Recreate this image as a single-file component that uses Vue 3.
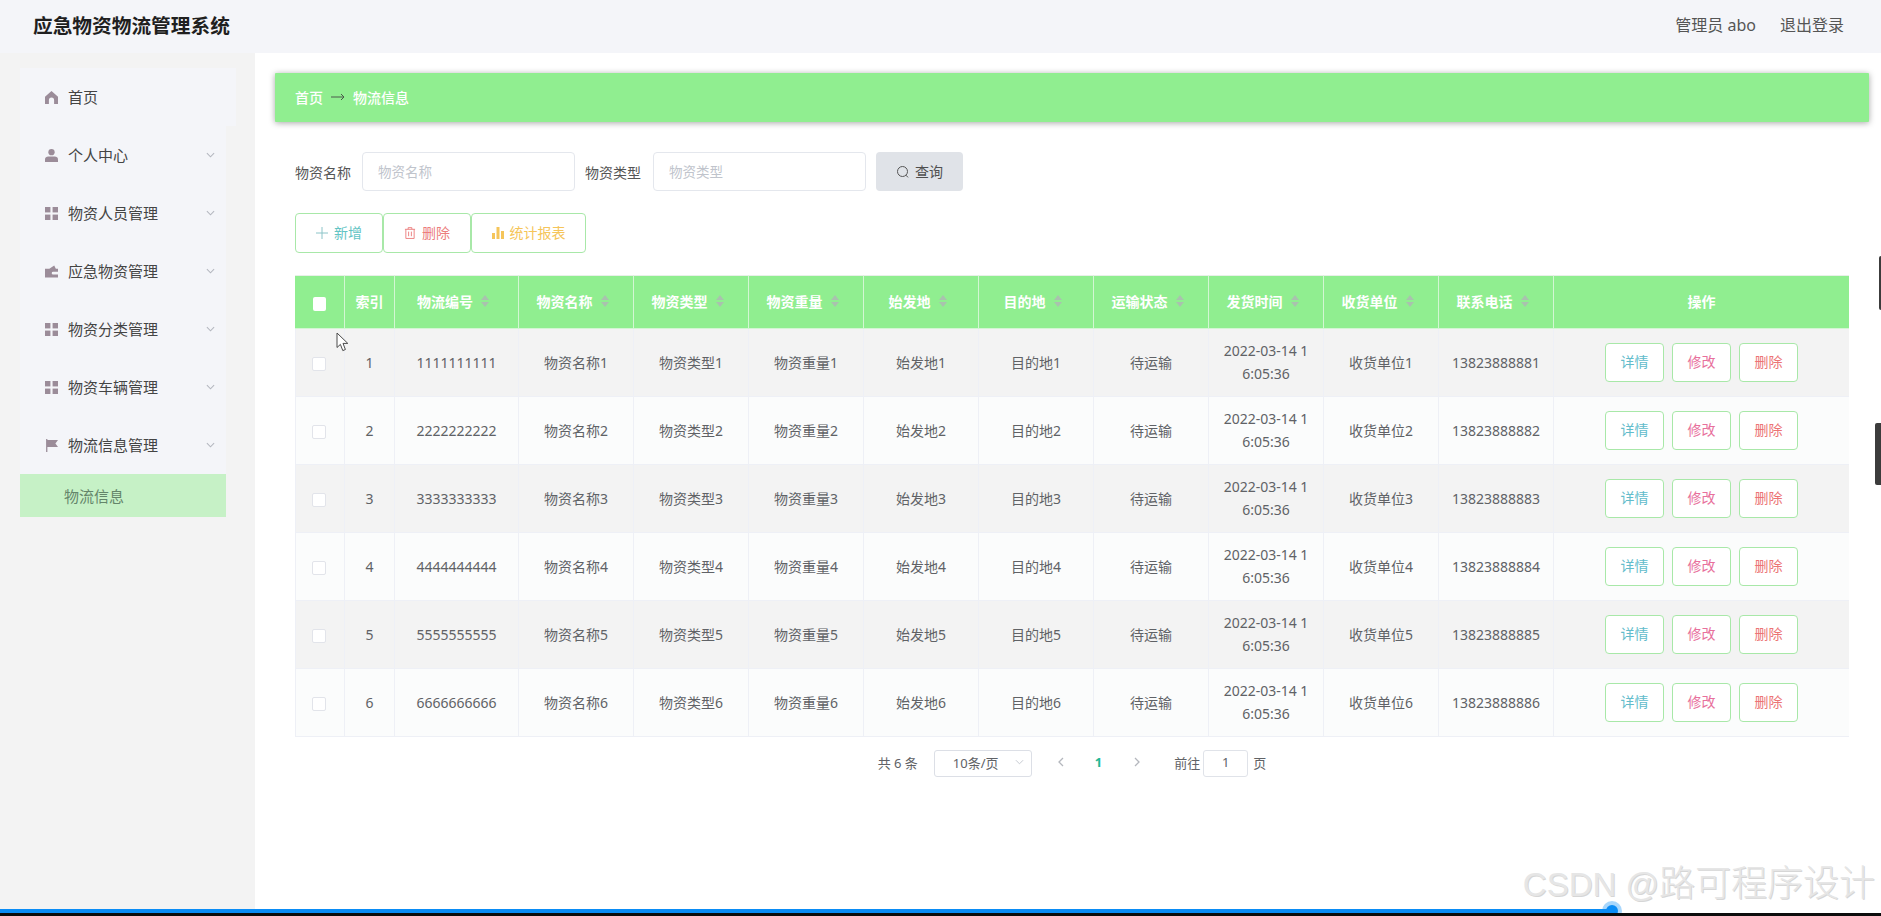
<script setup>
const menus = [
  { name: '首页', icon: 'home', plain: true },
  { name: '个人中心', icon: 'user' },
  { name: '物资人员管理', icon: 'grid' },
  { name: '应急物资管理', icon: 'case' },
  { name: '物资分类管理', icon: 'grid' },
  { name: '物资车辆管理', icon: 'grid' },
  { name: '物流信息管理', icon: 'flag' }
]
const cols = ['物流编号', '物资名称', '物资类型', '物资重量', '始发地', '目的地', '运输状态', '发货时间', '收货单位', '联系电话']
const rows = [1, 2, 3, 4, 5, 6].map((n) => ({
  n,
  code: String(n).repeat(10),
  name: '物资名称' + n,
  type: '物资类型' + n,
  weight: '物资重量' + n,
  from: '始发地' + n,
  to: '目的地' + n,
  phone: '1382388888' + n,
  unit: '收货单位' + n
}))
</script>

<template>
  <div class="page">
    <header class="top">
      <div class="brand">应急物资物流管理系统</div>
      <div class="user">
        <span>管理员 abo</span>
        <span>退出登录</span>
      </div>
    </header>

    <div class="body">
      <aside class="side">
        <nav class="menu">
          <div v-for="m in menus" :key="m.name" class="item" :class="{ home: m.plain }">
            <svg class="ico" viewBox="0 0 12 12">
              <path v-if="m.icon === 'home'" d="M6 0 12 5.4V12H8.4V8.4A2.4 2.4 0 0 0 3.6 8.4V12H0V5.4Z" />
              <template v-else-if="m.icon === 'user'">
                <circle cx="6" cy="2.9" r="2.9" />
                <path d="M0 12V9.6C0 7.9 1.4 7 3 7H9C10.6 7 12 7.9 12 9.6V12Z" />
              </template>
              <template v-else-if="m.icon === 'grid'">
                <rect x="0" y="0" width="5" height="5" />
                <rect x="7" y="0" width="5" height="5" />
                <rect x="0" y="7" width="5" height="5" />
                <rect x="7" y="7" width="5" height="5" />
              </template>
              <path v-else-if="m.icon === 'case'" fill-rule="evenodd" d="M0 3.5H4L8.5 0.5 10 3.5H12V11.5H0ZM7.5 6.2A1.3 1.3 0 0 0 7.5 8.8H12V6.2Z" />
              <path v-else d="M1 0H2.2V12H1ZM2.2 1H12L9.6 4.2 12 7.4H2.2Z" />
            </svg>
            <span class="label">{{ m.name }}</span>
            <svg v-if="!m.plain" class="chev" viewBox="0 0 10 6">
              <path d="M1 1 5 5 9 1" />
            </svg>
          </div>
          <div class="sub">物流信息</div>
        </nav>
      </aside>

      <main class="main">
        <div class="crumb">
          <span>首页</span>
          <svg class="arrow" viewBox="0 0 14 8"><path d="M0 4H13M10 1 13 4 10 7" /></svg>
          <span>物流信息</span>
        </div>

        <section class="content">
          <form class="filter" @submit.prevent>
            <label>物资名称</label>
            <input class="field" placeholder="物资名称" />
            <label class="second">物资类型</label>
            <input class="field" placeholder="物资类型" />
            <button class="search" type="button">
              <svg viewBox="0 0 14 14"><circle cx="6.5" cy="6.5" r="5" /><path d="M10 10.2 12 12.4" /></svg>
              <span>查询</span>
            </button>
          </form>

          <div class="actions">
            <button type="button" class="act add">
              <svg viewBox="0 0 12 12"><path d="M6 0V12M0 6H12" /></svg>
              <span>新增</span>
            </button>
            <button type="button" class="act del">
              <svg viewBox="0 0 12 13"><path d="M0.5 2.5H11.5M4 2.5V0.7H8V2.5M1.5 2.5V12.4H10.5V2.5M4.5 5V10M7.5 5V10" /></svg>
              <span>删除</span>
            </button>
            <button type="button" class="act stat">
              <svg viewBox="0 0 12 12"><path d="M0 6H3V12H0ZM4.5 0H7.5V12H4.5ZM9 4H12V12H9Z" /></svg>
              <span>统计报表</span>
            </button>
          </div>

          <table class="grid">
            <colgroup>
              <col style="width: 50px" />
              <col style="width: 50px" />
              <col style="width: 124px" />
              <col v-for="i in 9" :key="i" style="width: 115px" />
              <col style="width: 295px" />
            </colgroup>
            <thead>
              <tr>
                <th><span class="head-box"></span></th>
                <th>索引</th>
                <th v-for="c in cols" :key="c">
                  <span class="th-in">{{ c }}<i class="sort"></i></span>
                </th>
                <th>操作</th>
              </tr>
            </thead>
            <tbody>
              <tr v-for="r in rows" :key="r.n">
                <td><span class="box"></span></td>
                <td>{{ r.n }}</td>
                <td>{{ r.code }}</td>
                <td>{{ r.name }}</td>
                <td>{{ r.type }}</td>
                <td>{{ r.weight }}</td>
                <td>{{ r.from }}</td>
                <td>{{ r.to }}</td>
                <td>待运输</td>
                <td class="time">2022-03-14 16:05:36</td>
                <td>{{ r.unit }}</td>
                <td>{{ r.phone }}</td>
                <td>
                  <div class="ops">
                    <button type="button" class="op view">详情</button>
                    <button type="button" class="op edit">修改</button>
                    <button type="button" class="op drop">删除</button>
                  </div>
                </td>
              </tr>
            </tbody>
          </table>

          <div class="pager">
            <span>共 6 条</span>
            <div class="size">
              <span>10条/页</span>
              <svg viewBox="0 0 10 6"><path d="M1 1 5 5 9 1" /></svg>
            </div>
            <svg class="nav prev" viewBox="0 0 6 10"><path d="M5 1 1 5 5 9" /></svg>
            <b class="cur">1</b>
            <svg class="nav next" viewBox="0 0 6 10"><path d="M1 1 5 5 1 9" /></svg>
            <span class="goto">前往</span>
            <div class="jump">1</div>
            <span>页</span>
          </div>
        </section>
      </main>
    </div>

    <svg class="cursor" viewBox="0 0 13 20">
      <path d="M1 1V15.5L4.4 12.4 6.8 18.6 9.4 17.5 7 11.4H11.8Z" />
    </svg>
    <i class="edge edge-a"></i>
    <i class="edge edge-b"></i>
    <div class="mark">CSDN @<span>路可程序设计</span></div>
    <div class="player">
      <div class="played"></div>
      <i class="knob"></i>
    </div>
  </div>
</template>

<style scoped>
.page {
  position: relative;
  height: 916px;
  overflow: hidden;
  display: flex;
  flex-direction: column;
  background: #fff;
  color: #606266;
  font-family: "Noto Sans", "Noto Sans CJK SC", sans-serif;
  font-size: 14px;
}
.top {
  height: 53px;
  flex: none;
  box-sizing: border-box;
  padding: 0 37px 5px 33px;
  display: flex;
  align-items: center;
  justify-content: space-between;
  background: #f4f5f9;
}
.brand {
  font-size: 19.7px;
  font-weight: 700;
  color: #1f1f1f;
}
.user {
  display: flex;
  gap: 24px;
  font-size: 16px;
  color: #555;
}
.body {
  flex: 1;
  display: flex;
  min-height: 0;
}
.side {
  width: 255px;
  flex: none;
  box-sizing: border-box;
  padding: 15px 0 0 20px;
  background: #f3f3f3;
}
.menu {
  width: 206px;
  background: #f4f5f9;
}
.item {
  height: 58px;
  box-sizing: border-box;
  padding-left: 25px;
  display: flex;
  align-items: center;
  font-size: 15px;
  color: #444;
}
.item.home {
  width: 216px;
  background: #f4f5f9;
}
.ico {
  width: 13px;
  height: 13px;
  margin-right: 10px;
  fill: #9b8c99;
}
.label {
  flex: 1;
  padding-bottom: 2px;
}
.chev {
  width: 9px;
  height: 6px;
  margin-right: 11px;
  fill: none;
  stroke: #b4b7bf;
  stroke-width: 1.2;
}
.sub {
  height: 43px;
  box-sizing: border-box;
  padding: 0 0 1px 44px;
  display: flex;
  align-items: center;
  background: #c6f1c6;
  color: #64856a;
  font-size: 15px;
}
.main {
  flex: 1;
  min-width: 0;
  box-sizing: border-box;
  padding: 20px 12px 0 20px;
}
.crumb {
  height: 49px;
  box-sizing: border-box;
  padding: 0 0 2px 20px;
  display: flex;
  align-items: center;
  gap: 8px;
  background: #90ee90;
  color: #fff;
  font-weight: 500;
  box-shadow: 0 1px 6px rgba(0, 0, 0, 0.35);
  border-radius: 1px;
}
.arrow {
  width: 14px;
  height: 8px;
  fill: none;
  stroke: #4c5a4c;
  stroke-width: 1;
}
.content {
  padding: 30px 20px 0;
}
.filter {
  display: flex;
  align-items: center;
  height: 39px;
  color: #555;
}
.filter label {
  width: 67px;
  flex: none;
}
.filter .second {
  margin-left: 10px;
  width: 57px;
  margin-right: 11px;
  white-space: nowrap;
}
.field {
  width: 213px;
  height: 39px;
  box-sizing: border-box;
  padding: 0 15px;
  border: 1px solid #e4e7ed;
  border-radius: 4px;
  outline: none;
  font: inherit;
  font-size: 13.5px;
  background: #fff;
}
.field::placeholder {
  color: #c0c4cc;
}
.search {
  width: 87px;
  height: 39px;
  margin-left: 10px;
  padding: 0;
  border: 0;
  border-radius: 4px;
  background: #e0e3e8;
  color: #4f4f4f;
  font: inherit;
  display: flex;
  align-items: center;
  justify-content: center;
  gap: 5px;
}
.search span {
  padding-bottom: 2px;
}
.search svg {
  width: 14px;
  height: 14px;
  fill: none;
  stroke: #555;
  stroke-width: 1;
}
.actions {
  display: flex;
  margin-top: 22px;
}
.act {
  height: 40px;
  box-sizing: border-box;
  padding: 0;
  border: 1.5px solid #a8e8a8;
  border-radius: 4px;
  background: #fff;
  font: inherit;
  display: flex;
  align-items: center;
  justify-content: center;
  gap: 6px;
}
.act span {
  padding-bottom: 2px;
}
.act svg {
  width: 12px;
  height: 12px;
  fill: none;
  stroke-width: 1;
  stroke: currentColor;
}
.add {
  width: 88px;
  color: #62c4c4;
}
.add svg {
  stroke: #8cc4c8;
}
.del {
  width: 88px;
  color: #ec7d7d;
}
.stat {
  width: 115px;
  color: #f5c55a;
}
.stat svg {
  fill: currentColor;
  stroke: none;
}
.grid {
  width: 1554px;
  margin-top: 22px;
  border-collapse: separate;
  border-spacing: 0;
  table-layout: fixed;
}
.grid th {
  height: 54px;
  box-sizing: border-box;
  padding: 0 0 3px;
  background: #90ee90;
  color: #fff;
  font-weight: 700;
  font-size: 14px;
  border-right: 1px solid #d3f6d3;
  border-bottom: 1px solid #d3f6d3;
  border-top: 1px solid #e8f0e8;
}
.grid th:first-child {
  padding: 0;
}
.grid th:last-child {
  border-right: 0;
}
.th-in {
  display: inline-flex;
  align-items: center;
  gap: 8px;
  margin-right: 7px;
}
.sort {
  position: relative;
  width: 8px;
  height: 12px;
}
.sort::before,
.sort::after {
  content: "";
  position: absolute;
  left: 0;
  border-left: 4px solid transparent;
  border-right: 4px solid transparent;
}
.sort::before {
  top: 0;
  border-bottom: 5px solid #a9c2ae;
}
.sort::after {
  bottom: 0;
  border-top: 5px solid #a9c2ae;
}
.head-box {
  display: inline-block;
  vertical-align: middle;
  width: 13px;
  height: 14px;
  background: #fff;
  border-radius: 2px;
}
.grid td {
  height: 68px;
  box-sizing: border-box;
  padding: 0 10px 1px;
  text-align: center;
  line-height: 23px;
  color: #606266;
  border-right: 1px solid #eef0f6;
  border-bottom: 1px solid #eef0f6;
  word-break: break-all;
}
.grid td:first-child {
  border-left: 1px solid #eef0f6;
}
.grid td:last-child {
  border-right: 0;
}
.grid tbody tr:nth-child(odd) td {
  background: #f3f3f3;
}
.grid tbody tr:nth-child(even) td {
  background: #fbfcfc;
}
.box {
  display: inline-block;
  vertical-align: middle;
  width: 14px;
  height: 14px;
  margin-right: 3px;
  box-sizing: border-box;
  background: #fff;
  border: 1px solid #e2e4ea;
  border-radius: 2px;
}
.ops {
  display: flex;
  justify-content: center;
  gap: 8px;
}
.op {
  width: 59px;
  height: 39px;
  padding: 0 0 2px;
  box-sizing: border-box;
  border: 1.5px solid #a8e8a8;
  border-radius: 4px;
  background: #fff;
  font: inherit;
}
.view {
  color: #62bccb;
}
.edit {
  color: #e8709c;
}
.drop {
  color: #ec7474;
}
.pager {
  display: flex;
  align-items: center;
  justify-content: center;
  margin-top: 11px;
  height: 28px;
  font-size: 13px;
  color: #606266;
}
.size {
  width: 98px;
  height: 27px;
  box-sizing: border-box;
  margin: 2px 0 0 16px;
  padding: 0 7px 2px 18px;
  display: flex;
  align-items: center;
  justify-content: space-between;
  border: 1px solid #dcdfe6;
  border-radius: 3px;
}
.size svg {
  width: 9px;
  height: 6px;
  fill: none;
  stroke: #c0c4cc;
  stroke-width: 1;
}
.nav {
  width: 6px;
  height: 10px;
  fill: none;
  stroke: #b4b7bd;
  stroke-width: 1.3;
}
.prev {
  margin-left: 26px;
}
.next {
  margin-left: 32px;
}
.cur {
  margin-left: 31px;
  color: #1fb894;
  font-weight: 700;
}
.goto {
  margin-left: 34px;
}
.jump {
  width: 45px;
  height: 27px;
  box-sizing: border-box;
  margin: 2px 5px 0 3px;
  padding-bottom: 2px;
  display: flex;
  align-items: center;
  justify-content: center;
  border: 1px solid #e0e3e9;
  border-radius: 3px;
}
.cursor {
  position: absolute;
  left: 336px;
  top: 332px;
  width: 13px;
  height: 20px;
  fill: #fff;
  stroke: #4a4a4a;
  stroke-width: 1;
}
.edge {
  position: absolute;
  right: 0;
  background: #3c3c3c;
  border-radius: 2px 0 0 2px;
}
.edge-a {
  top: 256px;
  width: 2px;
  height: 54px;
}
.edge-b {
  top: 423px;
  width: 6px;
  height: 62px;
}
.mark {
  position: absolute;
  right: 6px;
  top: 863px;
  font-family: "Liberation Sans", "Noto Sans CJK SC", sans-serif;
  font-size: 33px;
  line-height: 42px;
  font-weight: 300;
  white-space: nowrap;
  color: #e6e6e6;
  text-shadow: 1px 1px 0 #d6d6d6;
}
.mark span {
  font-size: 36px;
}
.player {
  position: absolute;
  left: 0;
  right: 0;
  bottom: 0;
  height: 7px;
}
.player::after {
  content: "";
  position: absolute;
  left: 0;
  right: 0;
  bottom: 0;
  height: 3px;
  background: #0c0c0c;
}
.played {
  position: absolute;
  left: 0;
  top: 0;
  width: 1612px;
  height: 4px;
  background: #0a8cf5;
}
.knob {
  position: absolute;
  left: 1606px;
  top: -4px;
  width: 12px;
  height: 12px;
  border-radius: 50%;
  background: #0a8cf5;
  box-shadow: 0 0 0 4px rgba(10, 140, 245, 0.35);
}
</style>
